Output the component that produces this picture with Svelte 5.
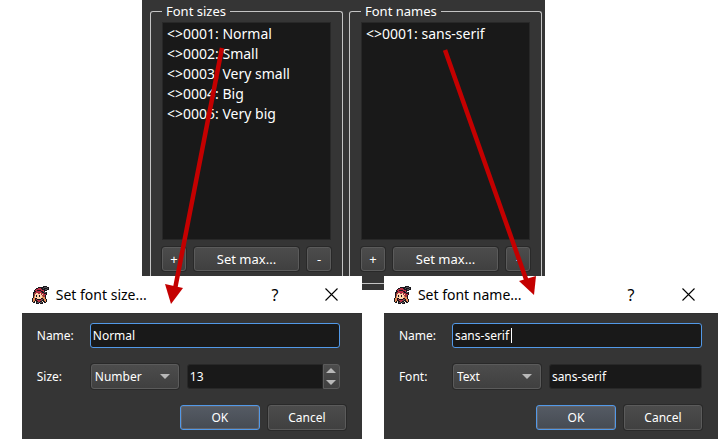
<script>
  const groups = [
    {
      title: 'Font sizes',
      items: ['<>0001: Normal', '<>0002: Small', '<>0003: Very small', '<>0004: Big', '<>0005: Very big']
    },
    { title: 'Font names', items: ['<>0001: sans-serif'] }
  ];

  // One character per pixel of the window icon
  const sprite = [
    '...........kkkk...',
    '......kkkkkkgggkk.',
    '....kkrrrkkgkkkgk.',
    '...krrrrrrkkkggkk.',
    '..krrkkkkrrrkkk...',
    '..kkrrrrrkkrk.....',
    '.kkhrrrrrrkkggk...',
    '.khhsshhshrrkkk...',
    '.khsssssshshrrk...',
    '.khskssksshhrk....',
    '.kosksskssohhk....',
    '.kosssssssoook....',
    'kookksssskkook....',
    'kookrkkkkrgkook...',
    'kookkrrrrgkkook...',
    'kokskkrrkkskkok...',
    '.kk.kggkggk.kk....',
    '....kkk.kkk.......'
  ];
  const colours = { k: '#17151a', g: '#555258', r: '#b72d43', h: '#9c3a38', s: '#ffd3ac', o: '#e28a55' };
  const pixels = sprite.flatMap((row, y) =>
    [...row].map((c, x) => ({ x, y, fill: colours[c] })).filter((p) => p.fill)
  );

  let sizeName = $state('Normal');
  let sizeType = $state('Number');
  let size = $state('13');
  let fontName = $state('sans-serif');
  let fontType = $state('Text');
  let font = $state('sans-serif');
</script>

{#snippet titlebar(title)}
  <header>
    <svg class="sprite" viewBox="0 0 18 18" shape-rendering="crispEdges" aria-hidden="true">
      {#each pixels as p}
        <rect x={p.x} y={p.y} width="1" height="1" fill={p.fill} />
      {/each}
    </svg>
    <h2>{title}</h2>
    <button class="plain" aria-label="Help">?</button>
    <button class="plain" aria-label="Close">
      <svg class="cross" viewBox="0 0 13 13" aria-hidden="true"><path d="M.5.5l12 12M12.5.5l-12 12" /></svg>
    </button>
  </header>
{/snippet}

{#snippet actions()}
  <footer>
    <button class="btn ok">OK</button>
    <button class="btn">Cancel</button>
  </footer>
{/snippet}

<main>
  <div class="top">
    <section class="panel">
      {#each groups as group}
        <fieldset>
          <legend>{group.title}</legend>
          <ul>
            {#each group.items as item}
              <li>{item}</li>
            {/each}
          </ul>
          <div class="tools">
            <button class="btn" aria-label="Add">+</button>
            <button class="btn">Set max...</button>
            <button class="btn" aria-label="Remove">-</button>
          </div>
        </fieldset>
      {/each}
    </section>
  </div>

  <div class="dialogs">
    <section class="dialog sizes">
      {@render titlebar('Set font size...')}
      <div class="body">
        <div class="fields">
          <label for="size-name">Name:</label>
          <input id="size-name" class="focused" bind:value={sizeName} />
          <label for="size-value">Size:</label>
          <div class="pair">
            <div class="combo">
              <select aria-label="Size type" bind:value={sizeType}>
                <option>Number</option>
                <option>Variable</option>
              </select>
              <svg viewBox="0 0 10 5" aria-hidden="true"><path d="M0 0h10l-5 5z" /></svg>
            </div>
            <div class="spin">
              <input id="size-value" bind:value={size} />
              <div class="steps">
                <button aria-label="Increase"><svg viewBox="0 0 10 5" aria-hidden="true"><path d="M0 5h10l-5-5z" /></svg></button>
                <button aria-label="Decrease"><svg viewBox="0 0 10 5" aria-hidden="true"><path d="M0 0h10l-5 5z" /></svg></button>
              </div>
            </div>
          </div>
        </div>
        {@render actions()}
      </div>
    </section>

    <div class="strip"></div>

    <section class="dialog">
      {@render titlebar('Set font name...')}
      <div class="body">
        <div class="fields">
          <label for="font-name">Name:</label>
          <div class="edit">
            <input id="font-name" class="focused" bind:value={fontName} />
            <span class="caret"></span>
          </div>
          <label for="font-value">Font:</label>
          <div class="pair">
            <div class="combo">
              <select aria-label="Font type" bind:value={fontType}>
                <option>Text</option>
                <option>Variable</option>
              </select>
              <svg viewBox="0 0 10 5" aria-hidden="true"><path d="M0 0h10l-5 5z" /></svg>
            </div>
            <input id="font-value" bind:value={font} />
          </div>
        </div>
        {@render actions()}
      </div>
    </section>
  </div>

  <svg class="arrows" viewBox="0 0 726 445" preserveAspectRatio="none" aria-hidden="true">
    <path d="M222 48L175 289M445 50L527 282" />
    <polygon points="165,284 183,288 171,304" />
    <polygon points="519,281 536,276 534,295" />
  </svg>
</main>

<style>
  :global(body) {
    background: #fff;
  }
  main {
    position: relative;
    font-family: 'Noto Sans', 'Open Sans', sans-serif;
    font-size: 12px;
    color: #fff;
  }
  main * {
    box-sizing: border-box;
  }
  button,
  input,
  select {
    font: inherit;
    color: inherit;
    margin: 0;
    min-width: 0;
    outline: none;
  }
  .top {
    display: grid;
    grid-template-columns: 142fr 403fr 181fr;
  }
  .panel {
    grid-column: 2;
    display: grid;
    grid-template-columns: 1fr 1fr;
    gap: 6px;
    padding: 1px 3px 0 8px;
    background: #353535;
    font-size: 13px;
  }
  fieldset {
    min-width: 0;
    margin: 0;
    padding: 1px 11px 5px;
    border: 1px solid #c4c4c4;
    border-bottom: 0;
    border-radius: 3px 3px 0 0;
  }
  legend {
    padding: 0 4px;
    line-height: 20px;
  }
  ul {
    height: 218px;
    margin: 0;
    padding: 1px 4px;
    list-style: none;
    background: #191919;
    border: 1px solid #282828;
    font-size: 14px;
    line-height: 20px;
  }
  .tools {
    display: grid;
    grid-template-columns: 24px 1fr 24px;
    gap: 8px;
    padding-top: 7px;
  }
  .btn {
    height: 25px;
    padding: 0;
    border: 1px solid #5b5b5b;
    border-radius: 3px;
    background: linear-gradient(#4c4c4c, #404040);
    box-shadow: 0 0 0 1px #292929;
    background-clip: padding-box;
    line-height: 20px;
  }
  .tools .btn {
    height: 24px;
  }
  .btn.ok {
    border-color: #5299e8;
    background: linear-gradient(#555b64, #464b53);
    box-shadow: inset 0 0 0 1px #636369;
  }
  .dialogs {
    display: grid;
    grid-template-columns: 340fr 22fr 334fr;
    padding: 0 1.1% 0 3%;
  }
  .strip {
    height: 14px;
    background: linear-gradient(#353535 7px, #c4c4c4 7px 8px, #353535 8px);
  }
  header {
    display: flex;
    align-items: center;
    height: 37px;
    padding: 0 16px 0 10px;
    background: #fff;
    color: #000;
  }
  .sprite {
    width: 18px;
    height: 18px;
  }
  h2 {
    flex: 1;
    margin: 0 0 0 6px;
    font-size: 14px;
    font-weight: 400;
    line-height: 20px;
  }
  .plain {
    display: grid;
    place-items: center;
    width: 28px;
    height: 28px;
    padding: 0;
    border: 0;
    background: none;
    font-size: 16px;
  }
  .plain + .plain {
    margin-left: 29px;
  }
  .cross {
    width: 13px;
    height: 13px;
    stroke: #000;
    stroke-width: 1.1;
  }
  .body {
    padding: 9px 16px;
    height: 126px;
    background: #353535;
    border-top: 1px solid #303030;
  }
  .fields {
    display: grid;
    grid-template-columns: 53px 1fr;
    row-gap: 16px;
    align-items: center;
    margin-left: -1px;
  }
  .sizes .fields {
    margin-right: 6px;
  }
  input {
    width: 100%;
    height: 25px;
    padding: 0 2px;
    background: #191919;
    border: 1px solid #282828;
    border-radius: 3px;
  }
  .focused {
    border-color: #5299e8;
  }
  .edit {
    position: relative;
    display: flex;
  }
  .caret {
    position: absolute;
    left: 59px;
    top: 5px;
    width: 1px;
    height: 15px;
    background: #fff;
  }
  .pair {
    display: grid;
    grid-template-columns: 88px 1fr;
    gap: 8px;
    padding-left: 1px;
  }
  .combo {
    position: relative;
    display: grid;
  }
  .combo svg {
    position: absolute;
    right: 9px;
    top: 10px;
    pointer-events: none;
  }
  .combo svg,
  .steps svg {
    width: 10px;
    height: 5px;
    fill: #b8b8b8;
  }
  select {
    appearance: none;
    height: 25px;
    padding: 0 3px;
    border: 1px solid #5b5b5b;
    border-radius: 3px;
    background: linear-gradient(#4c4c4c, #404040);
    box-shadow: 0 0 0 1px #292929;
  }
  .spin {
    display: grid;
    grid-template-columns: 1fr 17px;
  }
  .spin input {
    border-radius: 3px 0 0 3px;
  }
  .steps {
    display: grid;
    grid-template-rows: 1fr 1fr;
    height: 25px;
    border: 1px solid #5b5b5b;
    border-radius: 0 3px 3px 0;
    background: linear-gradient(#4c4c4c, #404040);
  }
  .steps button {
    display: grid;
    place-items: center;
    padding: 0;
    border: 0;
    background: none;
  }
  footer {
    display: grid;
    grid-template-columns: 80px 78px;
    justify-content: end;
    gap: 8px;
    padding-top: 16px;
  }
  .arrows {
    position: absolute;
    left: 0;
    top: 0;
    width: 100%;
    height: 445px;
    pointer-events: none;
  }
  .arrows path {
    fill: none;
    stroke: #c40000;
    stroke-width: 4.5;
  }
  .arrows polygon {
    fill: #c40000;
  }
</style>
